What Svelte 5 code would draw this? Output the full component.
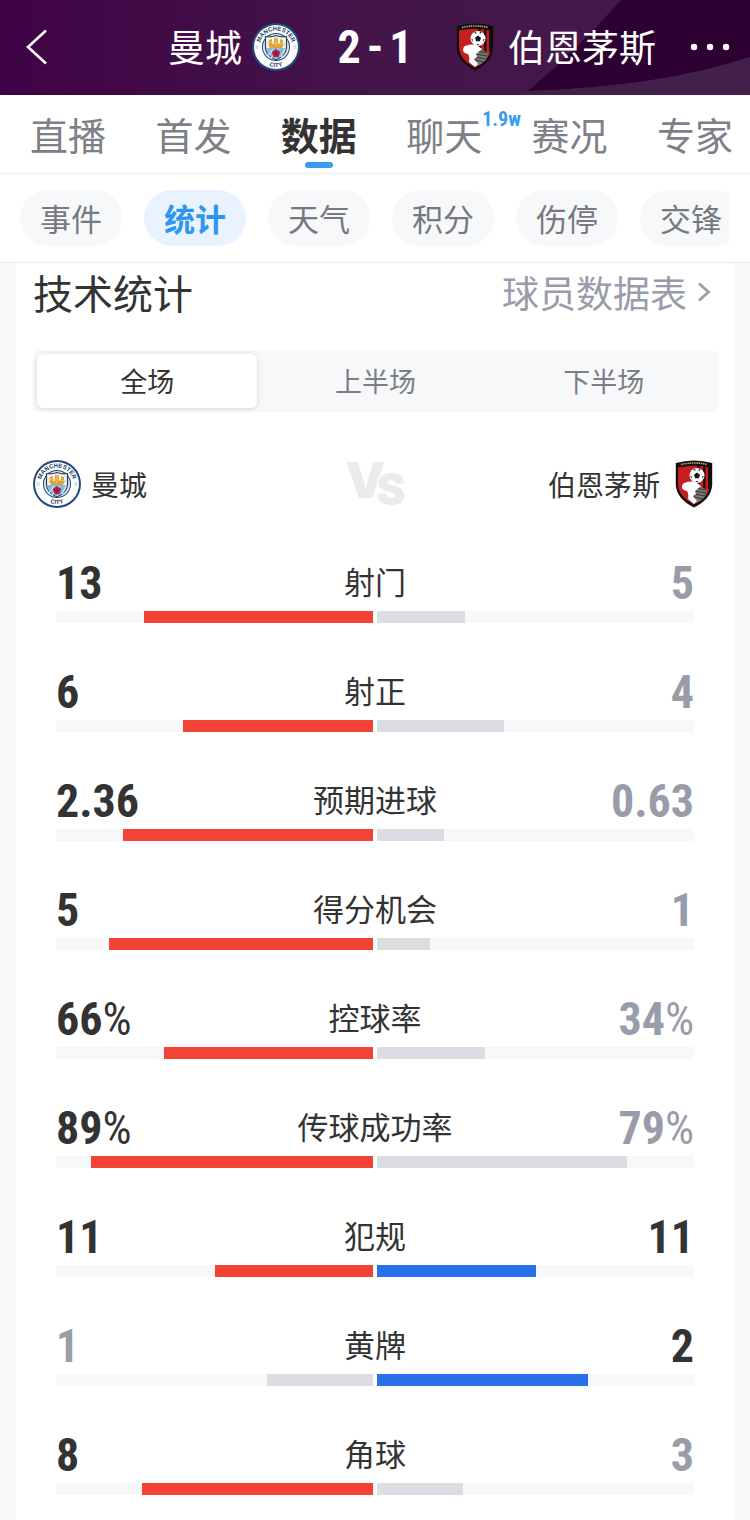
<script>
  const tabs = ['直播', '首发', '数据', '聊天', '赛况', '专家'];
  const chips = ['事件', '统计', '天气', '积分', '伤停', '交锋'];
  const periods = ['全场', '上半场', '下半场'];
  let tab = $state('数据');
  let chip = $state('统计');
  let period = $state('全场');

  const stats = [
    { name: '射门', home: 13, away: 5 },
    { name: '射正', home: 6, away: 4 },
    { name: '预期进球', home: 2.36, away: 0.63 },
    { name: '得分机会', home: 5, away: 1 },
    { name: '控球率', home: 66, away: 34, percent: true },
    { name: '传球成功率', home: 89, away: 79, percent: true },
    { name: '犯规', home: 11, away: 11 },
    { name: '黄牌', home: 1, away: 2 },
    { name: '角球', home: 8, away: 3 }
  ];

  function share(row, side) {
    return row.percent ? row[side] : (row[side] / (row.home + row.away)) * 100;
  }
</script>

{#snippet city(id)}
  <svg class="crest" viewBox="0 0 48 48" aria-hidden="true">
    <circle cx="24" cy="24" r="24" fill="#23497c" />
    <circle cx="24" cy="24" r="22" fill="#fff" />
    <circle cx="24" cy="24" r="14" fill="#23497c" />
    <circle cx="24" cy="24" r="13" fill="#dce9f2" />
    <defs>
      <path id="{id}-top" d="M7.5 24a16.5 16.5 0 0 1 33 0" />
      <path id="{id}-low" d="M4 24a20 20 0 0 0 40 0" />
    </defs>
    <text class="ring"><textPath href="#{id}-top" startOffset="50%" text-anchor="middle">MANCHESTER</textPath></text>
    <text class="ring"><textPath href="#{id}-low" startOffset="50%" text-anchor="middle">CITY</textPath></text>
    <path d="M3.500 23h3M3.500 25h3M41.500 23h3M41.500 25h3" stroke="#9ec0dc" stroke-width="1" />
    <path d="M13.500 13.500q5 1 10.500-1 5.500 2 10.500 1v12q-1 7-10.500 11.500-9.500-4.500-10.500-11.500z" fill="#f7f5ec" stroke="#28405f" stroke-width="1.200" />
    <path d="M14.200 25h19.600q-.8 7-9.800 11.200-9-4.200-9.800-11.200z" fill="#85b9e4" />
    <path d="M16 33l5-7M19 35l7-9M29 34l4-8" stroke="#d5e8f6" stroke-width="1.200" />
    <path d="M16 21h16l-2 4H18zM17 17l3-1v5h-3zM22 14.500l4 1v5.500h-4zM28 16l3 1v4h-3z" fill="#dda63c" />
    <path d="M15.500 19l17 2M24 14v9" stroke="#efc766" stroke-width="1" />
    <path d="M24 26l4.200 3-1.600 5h-5.200l-1.600-5z" fill="#b51f43" />
    <circle cx="24" cy="30.500" r="1.200" fill="#711b3c" />
  </svg>
{/snippet}

{#snippet cherries()}
  <svg class="crest narrow" viewBox="0 0 38 48" aria-hidden="true">
    <path d="M.8 3Q19-2 37.200 3v22q-1 14-18.200 22.500Q1.800 39 .8 25z" fill="#120c0d" />
    <path d="M3 7.500Q19 4 35 7.500V25q-1 12-16 19.500Q4 37 3 25z" fill="#c51f22" />
    <path d="M22 6.200h3v33h-3zM28 6.500h2.500V37H28zM33 7h2v22h-2z" fill="#20100f" />
    <path d="M6 4.400Q19 1.600 32 4.400" fill="none" stroke="#b9a77c" stroke-width="1.600" stroke-dasharray="1.500 .7" />
    <path d="M19 27l6-1 7 4-2 7q-4 4-9 6z" fill="#777" />
    <path d="M20 31l11 2M19 34l11 2M19 37l9 2M21 28l10 2" stroke="#3a3638" stroke-width="1" />
    <path d="M9 23q6-3 13 0l4 3-6 5 1 3-3 2 4 5-3 3-6-5q1-5-1-8-5-1-5-4 0-3 2-4z" fill="#fff" />
    <circle cx="22" cy="15.500" r="7.500" fill="#fff" />
    <path d="M22 12.500l3 2.200-1.100 3.500h-3.800L19 14.700zM18 10l2-1.200.5 2zM26 10l-2-1.200-.5 2zM15.300 16l1.700.5-.5 2zM28.700 16l-1.700.5.5 2zM20.500 22l1.500-1.200 1.500 1.200z" fill="#151314" />
  </svg>
{/snippet}

{#snippet figure(value, percent)}
  {value}{#if percent}<small>%</small>{/if}
{/snippet}

<div class="page">
  <header>
    <svg class="swoosh" viewBox="0 0 240 95" preserveAspectRatio="none" aria-hidden="true">
      <path d="M111 0H240V57Q150 87 18 91Q70 47 111 0z" fill="#2c0030" />
      <path d="M240 57Q150 87 18 91L10 95H240z" fill="#43204a" />
    </svg>
    <button class="back" aria-label="返回">
      <svg viewBox="0 0 22 36" aria-hidden="true"><path d="M20 1.500L2 18l18 16.500" fill="none" stroke="#fff" stroke-width="2.600" /></svg>
    </button>
    <div class="side home"><span>曼城</span>{@render city('head')}</div>
    <div class="score"><span>2</span><span>-</span><span>1</span></div>
    <div class="side away">{@render cherries()}<span>伯恩茅斯</span></div>
    <button class="more" aria-label="更多">
      <svg viewBox="0 0 40 8" aria-hidden="true"><g fill="#fff"><circle cx="4" cy="4" r="3.200" /><circle cx="20" cy="4" r="3.200" /><circle cx="36" cy="4" r="3.200" /></g></svg>
    </button>
  </header>

  <nav class="tabs">
    {#each tabs as t}
      <button class:active={tab === t} onclick={() => (tab = t)}>{t}{#if t === '聊天'}<sup>1.9w</sup>{/if}</button>
    {/each}
  </nav>

  <nav class="chips">
    <div class="scroller">
      {#each chips as c}
        <button class:active={chip === c} onclick={() => (chip = c)}>{c}</button>
      {/each}
    </div>
  </nav>

  <main>
    <div class="title">
      <h1>技术统计</h1>
      <a href="#players">球员数据表<svg viewBox="0 0 14 20" aria-hidden="true"><path d="M2 1.500L11.500 10 2 18.500" fill="none" stroke="#999daa" stroke-width="2.800" /></svg></a>
    </div>

    <div class="periods">
      {#each periods as p}
        <button class:active={period === p} onclick={() => (period = p)}>{p}</button>
      {/each}
    </div>

    <div class="teams">
      <div class="team">{@render city('row')}<span>曼城</span></div>
      <div class="vs"><span>V</span><span class="s">S</span></div>
      <div class="team right"><span>伯恩茅斯</span>{@render cherries()}</div>
    </div>

    <ul>
      {#each stats as row}
        <li>
          <div class="line">
            <strong class:lower={row.home < row.away}>{@render figure(row.home, row.percent)}</strong>
            <span>{row.name}</span>
            <strong class="end" class:lower={row.away < row.home}>{@render figure(row.away, row.percent)}</strong>
          </div>
          <div class="bars">
            <div class="bar left"><i class:lead={row.home >= row.away} style="width: {share(row, 'home')}%"></i></div>
            <div class="bar"><i class:lead={row.away >= row.home} style="width: {share(row, 'away')}%"></i></div>
          </div>
        </li>
      {/each}
    </ul>
  </main>
</div>

<style>
  :global(body) { background: #f7f8fa; }
  .page {
    font-family: "Noto Sans CJK SC", "Noto Sans", sans-serif;
    color: #333;
    overflow: hidden;
  }
  button {
    border: 0;
    padding: 0;
    margin: 0;
    background: none;
    font: inherit;
    color: inherit;
    cursor: pointer;
    white-space: nowrap;
  }
  svg { display: block; flex: none; }
  .crest { width: 48px; height: 48px; }
  .crest.narrow { width: 38px; }
  .ring { font: bold 6px "Liberation Sans", sans-serif; fill: #1f3a63; }

  header {
    position: relative;
    box-sizing: border-box;
    display: grid;
    grid-template-columns: 42px 1fr 110px 1fr 48px;
    align-items: center;
    height: 95px;
    padding: 0 20px 2px 26px;
    background: linear-gradient(90deg, #3f0345, #431549 50%, #451b4c);
    color: #fff;
    font-size: 37px;
  }
  header > :not(.swoosh) { position: relative; }
  .swoosh { position: absolute; right: 0; top: 0; width: 32%; height: 100%; }
  .back svg { width: 22px; height: 36px; }
  .more { justify-self: end; }
  .more svg { width: 40px; height: 8px; }
  .side { display: flex; align-items: center; white-space: nowrap; }
  .side span { line-height: 44px; padding-bottom: 2px; }
  .home { justify-content: flex-end; gap: 10px; padding-right: 20px; }
  .away { gap: 14px; padding-left: 26px; }
  .score {
    display: flex;
    justify-content: center;
    gap: 6px;
    font: bold 46px/48px "Roboto Condensed", "Liberation Sans Narrow", sans-serif;
  }

  .tabs {
    display: flex;
    justify-content: space-between;
    height: 78px;
    padding: 0 17px 0 30px;
    background: #fff;
    border-bottom: 1px solid #ececee;
    color: #7d8087;
    font-size: 38px;
  }
  .tabs button { position: relative; line-height: 78px; }
  .tabs .active { color: #333; font-weight: 700; }
  .tabs .active::after {
    content: "";
    position: absolute;
    left: 50%;
    bottom: 5px;
    width: 28px;
    height: 6px;
    margin-left: -14px;
    border-radius: 3px;
    background: #379cf2;
  }
  sup {
    position: absolute;
    left: 100%;
    top: 12px;
    font: bold 20px/24px "Roboto Condensed", "Liberation Sans Narrow", sans-serif;
    color: #379cf2;
  }

  .chips {
    padding: 16px 20px;
    background: #fff;
    border-bottom: 1px solid #ececee;
  }
  .scroller { display: flex; gap: 22px; overflow: hidden; }
  .chips button {
    flex: none;
    padding: 0 20px;
    height: 56px;
    border-radius: 28px;
    background: #f7f8fa;
    color: #76797f;
    font-size: 31px;
    line-height: 54px;
  }
  .chips .active { background: #e8f3ff; color: #2f96f0; font-weight: 700; }

  main { margin: 0 16px; padding: 0 16px 0 17px; background: #fff; }
  .title { display: flex; align-items: center; justify-content: space-between; height: 58px; margin-bottom: 29px; }
  h1 { margin: 0; font-size: 40px; font-weight: 400; line-height: 58px; }
  a { display: flex; align-items: center; gap: 10px; padding-right: 7px; color: #999daa; font-size: 37px; line-height: 58px; text-decoration: none; }
  a svg { width: 14px; height: 20px; }

  .periods {
    display: grid;
    grid-template-columns: repeat(3, 1fr);
    border-radius: 6px;
    background: #f7f8fa;
    color: #7b7e84;
    font-size: 27px;
  }
  .periods button { height: 54px; margin: 4px; line-height: 54px; border-radius: 6px; }
  .periods .active { background: #fff; color: #333; box-shadow: 0 1px 5px #d5d7dc; }

  .teams { display: grid; grid-template-columns: 1fr auto 1fr; align-items: center; height: 48px; margin: 48px 0 43px; }
  .team { display: flex; align-items: center; gap: 10px; font-size: 28px; line-height: 48px; }
  .right { justify-content: flex-end; gap: 15px; padding-right: 5px; }
  .vs { display: flex; align-items: flex-start; height: 48px; color: #ebebed; font: 900 50px/40px Inter, sans-serif; }
  .vs .s { margin: 9px 0 0 -9px; font-size: 44px; -webkit-text-stroke: 3px #fff; paint-order: stroke fill; }

  ul { list-style: none; margin: 0; padding: 0 24px 0 23px; }
  li { height: 109px; }
  .line { display: grid; grid-template-columns: 1fr auto 1fr; align-items: center; height: 60px; }
  .line span { font-size: 31px; line-height: 48px; }
  strong { padding-top: 3px; font: bold 46px/48px "Roboto Condensed", "Liberation Sans Narrow", sans-serif; }
  small { font-size: 46px; font-weight: 400; }
  .end { text-align: right; }
  .lower { color: #999daa; }
  .bars { display: grid; grid-template-columns: 1fr 1fr; gap: 4px; }
  .bar { display: flex; height: 12px; background: #f7f8fa; }
  .left { justify-content: flex-end; }
  i { background: #dcdde3; }
  .lead { background: #2a70e8; }
  .left .lead { background: #f24336; }
</style>
